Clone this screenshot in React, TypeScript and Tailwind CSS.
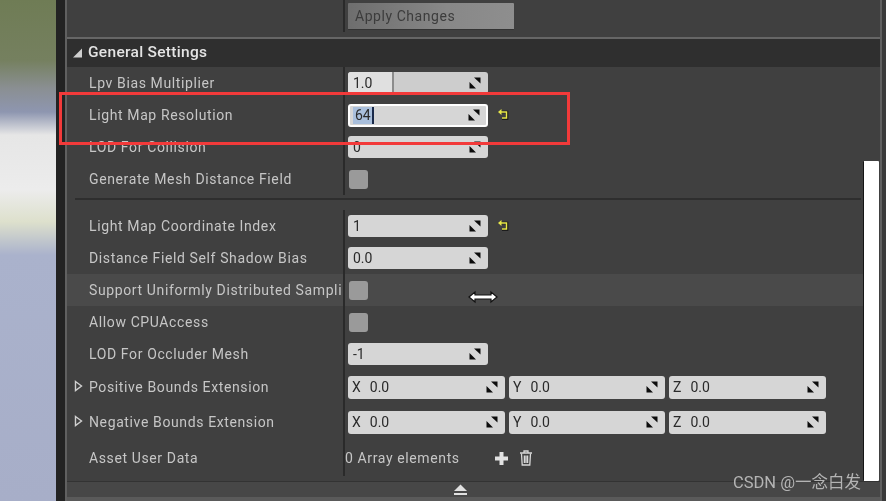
import React from "react";

const font = { };
void font;

function Spin({ className = "" }: { className?: string }) {
  return (
    <svg width="14" height="14" viewBox="0 0 14 14" className={`shrink-0 ${className}`}>
      <path d="M6 1.5 L12.5 1.5 L12.5 7.5 Z" fill="#0c0c0c" />
      <path d="M1.5 6 L1.5 12.5 L8 12.5 Z" fill="#0c0c0c" />
    </svg>
  );
}

function Reset() {
  return (
    <svg width="14" height="14" viewBox="0 0 14 14" className="ml-[9px] shrink-0">
      <path d="M3 4 H10 V10.5 H5" fill="none" stroke="#111" strokeWidth="2.6" />
      <path d="M3.5 4 H9.5 V10 H5" fill="none" stroke="#e8e84a" strokeWidth="1.5" />
      <path d="M1 4 L4.5 1 V7 Z" fill="#e8e84a" />
    </svg>
  );
}

function NumField({ value, reset }: { value: string; reset?: boolean }) {
  return (
    <div className="flex items-center">
      <div className="flex h-[22px] w-[140px] items-center justify-between rounded-[3px] bg-[#d6d6d6] pl-[5px] pr-[6px] text-[14px] text-[#2a2a2a]">
        <span>{value}</span>
        <Spin />
      </div>
      {reset && <Reset />}
    </div>
  );
}

function Check() {
  return <div className="ml-px h-[19px] w-[19px] rounded-[3px] bg-[#9a9a9a]" />;
}

function Row({
  label,
  h = 32,
  arrow,
  hover,
  children,
}: {
  label: string;
  h?: number;
  arrow?: boolean;
  hover?: boolean;
  children?: React.ReactNode;
}) {
  return (
    <div className={`flex ${hover ? "bg-[#4a4a4a]" : ""}`} style={{ height: h }}>
      <div className="flex w-[278px] shrink-0 items-center overflow-hidden whitespace-nowrap border-r-2 border-[#2a2a2a]">
        <span className="flex w-[22px] shrink-0 justify-center pl-[1px]">
          {arrow && (
            <svg width="9" height="12" viewBox="0 0 9 12" className="-mt-[3px]">
              <path d="M1.5 1.5 L7.5 6 L1.5 10.5 Z" fill="none" stroke="#d0d0d0" strokeWidth="1.4" />
            </svg>
          )}
        </span>
        <span className="text-[14px] tracking-[0.62px] text-[#c6c6c6]">{label}</span>
      </div>
      <div className="flex items-center pl-[3px]">{children}</div>
    </div>
  );
}

function Axis({ axis, w }: { axis: string; w: number }) {
  return (
    <div
      className="flex h-[23px] items-center justify-between rounded-[3px] bg-[#d6d6d6] pl-[4px] pr-[6px] text-[14px] text-[#2a2a2a]"
      style={{ width: w }}
    >
      <span className="flex gap-[9px]">
        <span>{axis}</span>
        <span>0.0</span>
      </span>
      <Spin />
    </div>
  );
}

function Vector() {
  return (
    <div className="flex gap-[4px]">
      <Axis axis="X" w={157} />
      <Axis axis="Y" w={156} />
      <Axis axis="Z" w={157} />
    </div>
  );
}

export default function App() {
  return (
    <div
      className="relative flex h-[501px] w-[886px] overflow-hidden bg-[#3c3c3c] blur-[0.4px]"
      style={{ fontFamily: "Roboto, 'Liberation Sans', sans-serif" }}
    >
      {/* viewport strip */}
      <div className="w-[56px] shrink-0 bg-[linear-gradient(180deg,#6f7c55_0px,#75805f_60px,#8a8f92_88px,#8e96b0_112px,#e6e6e6_135px,#ececec_190px,#dde0cc_222px,#aab2cc_255px,#a7aec8_501px)]" />
      <div className="w-[9px] shrink-0 bg-[#232323]" />
      {/* panel */}
      <div className="flex w-[817px] shrink-0 flex-col border-x-2 border-[#606060] bg-[#404040]">
        <div className="flex h-[37px] shrink-0">
          <div className="w-[278px] shrink-0 border-r-2 border-[#2a2a2a] mb-[5px]" />
          <div className="pl-[3px] pt-[3px]">
            <div className="flex h-[27px] w-[166px] items-center rounded-[1px] border-b border-[#333] bg-[linear-gradient(90deg,#6e6e6e,#888_60%,#8e8e8e)] pl-[7px] text-[14px] tracking-[0.55px] text-[#3c3c3c]">
              Apply Changes
            </div>
          </div>
        </div>
        <div className="flex h-[30px] shrink-0 items-center border-t-2 border-[#666] bg-[#2f2f2f] pl-[4px]">
          <svg width="12" height="12" viewBox="0 0 12 12" className="mr-[5px]">
            <path d="M11 1.5 V10.5 H2 Z" fill="#cfcfcf" />
          </svg>
          <span className="text-[15.5px] font-medium tracking-[0.3px] text-[#e4e4e4]">General Settings</span>
        </div>
        <div className="flex h-[414px] shrink-0">
          <div className="w-[796px] shrink-0">
            <Row label="Lpv Bias Multiplier">
              <div className="flex h-[22px] w-[140px] items-center justify-between rounded-[3px] bg-[#cdcdcd] pr-[6px] text-[14px] text-[#2a2a2a]">
                <div className="flex h-full w-[46px] items-center rounded-l-[3px] border-r-2 border-[#8c8c8c] bg-[#e0e0e0] pl-[5px]">
                  1.0
                </div>
                <Spin />
              </div>
            </Row>
            <Row label="Light Map Resolution">
              <div className="flex items-center">
                <div className="flex h-[23px] w-[140px] items-center justify-between rounded-[3px] border-2 border-white bg-[#d6d6d6] pl-[3px] pr-[5px] text-[14px] text-[#2a2a2a]">
                  <span className="border-r-2 border-[#1a2a4a] bg-[#a9bfdc] pl-[2px] pr-px leading-[17px]">64</span>
                  <Spin />
                </div>
                <Reset />
              </div>
            </Row>
            <Row label="LOD For Collision">
              <NumField value="0" />
            </Row>
            <Row label="Generate Mesh Distance Field">
              <Check />
            </Row>
            <div className="flex h-[15px] items-center pl-[8px] pr-[2px]">
              <div className="mb-[7px] h-[2px] w-full bg-[#2e2e2e]" />
            </div>
            <Row label="Light Map Coordinate Index">
              <NumField value="1" reset />
            </Row>
            <Row label="Distance Field Self Shadow Bias">
              <NumField value="0.0" />
            </Row>
            <Row label="Support Uniformly Distributed Sampling" hover>
              <Check />
            </Row>
            <Row label="Allow CPUAccess">
              <Check />
            </Row>
            <Row label="LOD For Occluder Mesh">
              <NumField value="-1" />
            </Row>
            <Row label="Positive Bounds Extension" h={34} arrow>
              <Vector />
            </Row>
            <Row label="Negative Bounds Extension" h={36} arrow>
              <Vector />
            </Row>
            <Row label="Asset User Data" h={36}>
              <div className="flex items-center text-[14px] tracking-[0.62px] text-[#c6c6c6]">
                <span className="-ml-[3px] w-[149px]">0 Array elements</span>
                <svg width="15" height="15" viewBox="0 0 15 15" className="mr-[10px]">
                  <path d="M7.5 1 V14 M1 7.5 H14" stroke="#e2e2e2" strokeWidth="4" />
                </svg>
                <svg width="14" height="16" viewBox="0 0 14 16" fill="none" stroke="#d8d8d8" strokeWidth="1.3">
                  <path d="M1 3 H13 M5 3 V1 H9 V3" />
                  <path d="M2.5 3.5 L3.2 15 H10.8 L11.5 3.5 M5.4 5.5 V13 M7 5.5 V13 M8.6 5.5 V13" />
                </svg>
              </div>
            </Row>
          </div>
          {/* scrollbar */}
          <div className="flex flex-1 flex-col pr-[2px] pt-[94px]">
            <div className="h-[320px] w-[16px] rounded-[1px] border-l border-[#151515] bg-white" />
          </div>
        </div>
        <div className="flex h-[16px] shrink-0 items-center justify-center border-t border-[#333] bg-[#474747] pr-[27px]">
          <svg width="15" height="12" viewBox="0 0 15 12">
            <path d="M7.5 0.5 L14 7 H1 Z" fill="#e0e0e0" />
            <rect x="1" y="9" width="13" height="2" fill="#e0e0e0" />
          </svg>
        </div>
        <div className="flex-1 bg-[#5a5a5a]" />
      </div>
      <div className="flex-1 bg-[#3a3a3a]" />

      {/* annotation */}
      <div className="absolute left-[59px] top-[92px] h-[53px] w-[511px] border-[3px] border-[#f23a3a]" />
      {/* resize cursor */}
      <svg width="30" height="14" viewBox="0 0 30 14" className="absolute left-[468px] top-[290px]">
        <path d="M1 7 L7 2 V5 H23 V2 L29 7 L23 12 V9 H7 V12 Z" fill="#fff" stroke="#111" strokeWidth="1.2" />
      </svg>
      {/* watermark */}
      <div
        className="absolute left-[733px] top-[471px] whitespace-nowrap text-[16.5px] text-[#b4b4b4]"
        style={{ fontFamily: "Roboto, 'Noto Sans CJK SC', sans-serif" }}
      >
        CSDN @一念白发
      </div>
    </div>
  );
}
